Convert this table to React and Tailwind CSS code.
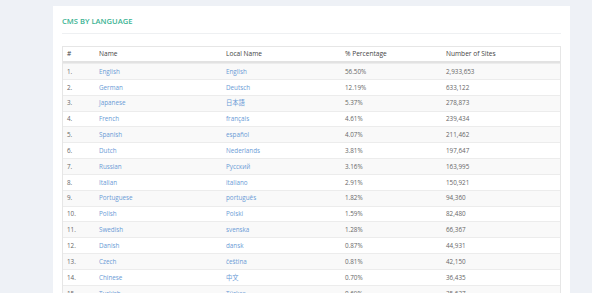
import React from "react";

const rows = [
  ["English", "English", "56.50%", "2,933,653"],
  ["German", "Deutsch", "12.19%", "633,122"],
  ["Japanese", "日本語", "5.37%", "278,873"],
  ["French", "français", "4.61%", "239,434"],
  ["Spanish", "español", "4.07%", "211,462"],
  ["Dutch", "Nederlands", "3.81%", "197,647"],
  ["Russian", "Русский", "3.16%", "163,995"],
  ["Italian", "italiano", "2.91%", "150,921"],
  ["Portuguese", "português", "1.82%", "94,360"],
  ["Polish", "Polski", "1.59%", "82,480"],
  ["Swedish", "svenska", "1.28%", "66,367"],
  ["Danish", "dansk", "0.87%", "44,931"],
  ["Czech", "čeština", "0.81%", "42,150"],
  ["Chinese", "中文", "0.70%", "36,435"],
  ["Turkish", "Türkçe", "0.69%", "35,637"],
];

const cols = "grid grid-cols-[36px_127px_119px_101px_1fr]";

export default function App() {
  return (
    <div
      className="w-[592px] h-[293px] overflow-hidden bg-[#eef1f6] pl-[53px] pt-[6px]"
      style={{ fontFamily: '"Open Sans", "Noto Sans CJK JP", sans-serif' }}
    >
      <div className="w-[517px] bg-white px-[9px] pt-[9px] pb-4">
        <div className="text-[7.6px] leading-[10px] font-semibold text-[#3bb393] pt-[1px]">
          CMS BY LANGUAGE
        </div>
        <div className="mt-[7px] h-px bg-[#eef0f2]" />
        <div className="mt-[12px] border border-[#e6e6e6] w-[499px]">
          <div className={`${cols} h-[16px] items-center border-b-2 border-[#e2e2e2] text-[6.6px] text-[#444] font-medium`}>
            <div className="pl-[4px]">#</div>
            <div>Name</div>
            <div>Local Name</div>
            <div>% Percentage</div>
            <div>Number of Sites</div>
          </div>
          {rows.map((r, i) => (
            <div
              key={i}
              className={`${cols} h-[15.85px] items-center border-t border-[#ececec] first:border-t-0 text-[6.3px] ${
                i % 2 === 0 ? "bg-[#f9f9f9]" : "bg-white"
              }`}
            >
              <div className="pl-[4px] text-[#666]">{i + 1}.</div>
              <div className="text-[#6b9bd6]">{r[0]}</div>
              <div className="text-[#6b9bd6]">{r[1]}</div>
              <div className="text-[#666]">{r[2]}</div>
              <div className="text-[#666]">{r[3]}</div>
            </div>
          ))}
        </div>
      </div>
    </div>
  );
}
